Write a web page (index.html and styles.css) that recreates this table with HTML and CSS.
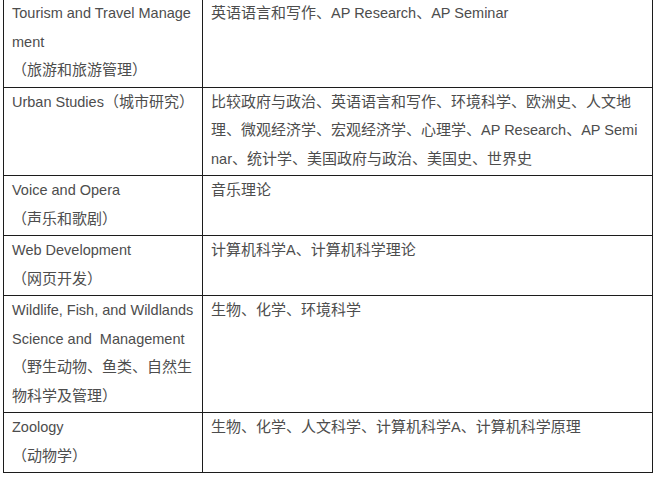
FILE: index.html
```html
<!DOCTYPE html>
<html lang="zh">
<head>
<meta charset="utf-8">
<link rel="stylesheet" href="styles.css">
</head>
<body>
<table class="majors">
  <colgroup>
    <col class="col-major">
    <col class="col-ap">
  </colgroup>
  <tbody>
    <tr>
      <td><span class="en">Tourism and Travel Management</span><br>（旅游和旅游管理）</td>
      <td>英语语言和写作、<span class="en">AP Research</span>、<span class="en">AP Seminar</span></td>
    </tr>
    <tr>
      <td><span class="en">Urban Studies</span>（城市研究）</td>
      <td>比较政府与政治、英语语言和写作、环境科学、欧洲史、人文地理、微观经济学、宏观经济学、心理学、<span class="en">AP Research</span>、<span class="en">AP Seminar</span>、统计学、美国政府与政治、美国史、世界史</td>
    </tr>
    <tr>
      <td><span class="en">Voice and Opera</span><br>（声乐和歌剧）</td>
      <td>音乐理论</td>
    </tr>
    <tr>
      <td><span class="en">Web Development</span><br>（网页开发）</td>
      <td>计算机科学<span class="en">A</span>、计算机科学理论</td>
    </tr>
    <tr>
      <td><span class="en">Wildlife, Fish, and Wildlands Science and&nbsp; Management</span><br>（野生动物、鱼类、自然生物科学及管理）</td>
      <td>生物、化学、环境科学</td>
    </tr>
    <tr>
      <td><span class="en">Zoology</span><br>（动物学）</td>
      <td>生物、化学、人文科学、计算机科学<span class="en">A</span>、计算机科学原理</td>
    </tr>
  </tbody>
</table>
</body>
</html>
```

FILE: styles.css
```css
html, body {
  margin: 0;
  padding: 0;
  background: #ffffff;
}

.majors {
  margin: -2px 0 0 3px;
  width: 649px;
  border-collapse: collapse;
  table-layout: fixed;
  font-family: "Liberation Sans", Arial, "Noto Sans CJK SC", sans-serif;
  font-size: 15px;
  line-height: 28.5px;
  color: #4d4d4d;
}

.col-major {
  width: 199px;
}

.col-ap {
  width: 450px;
}

.majors td {
  border: 1px solid #1c1c1c;
  padding: 0 6px 2px 8px;
  vertical-align: top;
  word-break: break-all;
}

.majors td + td {
  padding-right: 10px;
}

.en {
  font-size: 14.5px;
}
```
